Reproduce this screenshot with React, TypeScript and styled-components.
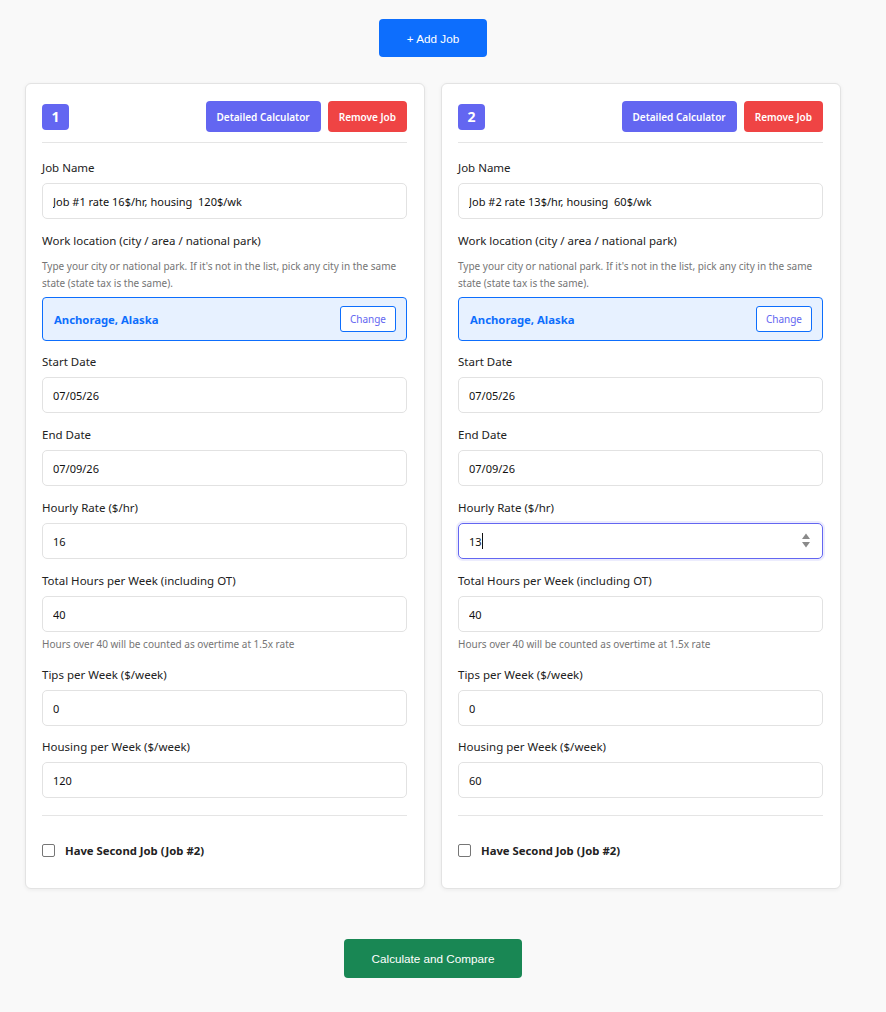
import React from 'react';
import styled, { createGlobalStyle } from 'styled-components';

interface Job {
  id: number;
  name: string;
  location: string;
  start: string;
  end: string;
  rate: string;
  hours: string;
  tips: string;
  housing: string;
  rateFocused?: boolean;
}

const GlobalStyle = createGlobalStyle`
  body {
    margin: 0;
    background: #f9f9f9;
    font-family: 'Noto Sans', 'Liberation Sans', sans-serif;
    color: #212529;
  }
`;

const Page = styled.div`
  width: 866px;
  padding: 19px 0 35px;
  display: flex;
  flex-direction: column;
  align-items: center;
`;

const AddButton = styled.button`
  width: 108px;
  height: 38px;
  border: none;
  border-radius: 4px;
  background: #0d6efd;
  color: #fff;
  font-family: 'Liberation Sans', Arial, sans-serif;
  font-size: 11.7px;
  cursor: pointer;
`;

const Grid = styled.div`
  margin-top: 26px;
  display: grid;
  grid-template-columns: 400px 400px;
  gap: 16px;
`;

const Card = styled.div`
  background: #fff;
  border: 1px solid #e3e3e3;
  border-radius: 6px;
  box-shadow: 0 1px 4px rgba(0, 0, 0, 0.06);
  padding: 17px 17px 30px 16px;
`;

const CardHeader = styled.div`
  display: flex;
  align-items: center;
  justify-content: space-between;
  padding-bottom: 10px;
  border-bottom: 1px solid #e5e5e5;
  margin-bottom: 16px;
`;

const Badge = styled.div`
  width: 27px;
  height: 26px;
  border-radius: 4px;
  background: #6366f1;
  color: #fff;
  font-weight: 700;
  font-size: 14px;
  display: flex;
  align-items: center;
  justify-content: center;
`;

const HeaderActions = styled.div`
  display: flex;
  gap: 7px;
`;

const HeaderButton = styled.button<{ $tone: 'indigo' | 'red' }>`
  height: 31px;
  padding: 0 11px;
  border: none;
  border-radius: 4px;
  background: ${(p) => (p.$tone === 'indigo' ? '#6366f1' : '#ef4444')};
  color: #fff;
  font-family: 'Noto Sans', sans-serif;
  font-weight: 600;
  font-size: 10px;
  cursor: pointer;
`;

const Field = styled.div<{ $gap?: number }>`
  margin-bottom: ${(p) => p.$gap ?? 13}px;
`;

const Label = styled.div`
  font-size: 11.5px;
  line-height: 18px;
  margin-bottom: 6px;
  color: #222;
`;

const InputWrap = styled.div`
  position: relative;
`;

const Input = styled.input<{ $focused?: boolean }>`
  box-sizing: border-box;
  width: 100%;
  height: 36px;
  padding: 0 10px;
  border: 1px solid ${(p) => (p.$focused ? '#6366f1' : '#e2e2e2')};
  box-shadow: ${(p) => (p.$focused ? '0 0 0 2px rgba(99, 102, 241, 0.12)' : 'none')};
  border-radius: 5px;
  font-family: 'Noto Sans', sans-serif;
  font-size: 11px;
  color: #111;
  background: #fff;
  outline: none;
`;

const Caret = styled.span`
  position: absolute;
  left: 24px;
  top: 10px;
  width: 1px;
  height: 16px;
  background: #111;
`;

const Spinner = styled.svg`
  position: absolute;
  right: 12px;
  top: 9px;
`;

const Help = styled.div<{ $tight?: boolean }>`
  font-size: 10px;
  line-height: 17px;
  color: #757575;
  margin: ${(p) => (p.$tight ? '4px 0 0' : '8px 0 5px')};
`;

const LocationBox = styled.div`
  display: flex;
  align-items: center;
  justify-content: space-between;
  height: 44px;
  box-sizing: border-box;
  padding: 0 10px 0 11px;
  background: #e7f1ff;
  border: 1px solid #0d6efd;
  border-radius: 4px;
`;

const LocationName = styled.span`
  color: #0d6efd;
  font-weight: 700;
  font-size: 11.3px;
`;

const ChangeButton = styled.button`
  height: 26px;
  padding: 0 9px;
  background: #fff;
  border: 1px solid #0d6efd;
  border-radius: 3px;
  color: #6366f1;
  font-family: 'Noto Sans', sans-serif;
  font-size: 10px;
  cursor: pointer;
`;

const Divider = styled.hr`
  border: none;
  border-top: 1px solid #e5e5e5;
  margin: 17px 0 27px;
`;

const CheckRow = styled.label`
  display: flex;
  align-items: center;
  gap: 10px;
  font-size: 11.3px;
  font-weight: 700;
  color: #222;
`;

const CheckBox = styled.span`
  width: 11px;
  height: 11px;
  border: 1px solid #767676;
  border-radius: 2px;
  background: #fff;
`;

const CalcButton = styled.button`
  margin-top: 50px;
  width: 178px;
  height: 39px;
  border: none;
  border-radius: 4px;
  background: #198754;
  color: #fff;
  font-family: 'Liberation Sans', Arial, sans-serif;
  font-size: 11.7px;
  cursor: pointer;
`;

const jobs: Job[] = [
  {
    id: 1,
    name: 'Job #1 rate 16$/hr, housing  120$/wk',
    location: 'Anchorage, Alaska',
    start: '07/05/26',
    end: '07/09/26',
    rate: '16',
    hours: '40',
    tips: '0',
    housing: '120',
  },
  {
    id: 2,
    name: 'Job #2 rate 13$/hr, housing  60$/wk',
    location: 'Anchorage, Alaska',
    start: '07/05/26',
    end: '07/09/26',
    rate: '13',
    hours: '40',
    tips: '0',
    housing: '60',
    rateFocused: true,
  },
];

const TextField: React.FC<{ label: string; value: string; gap?: number }> = ({ label, value, gap }) => (
  <Field $gap={gap}>
    <Label>{label}</Label>
    <Input readOnly value={value} />
  </Field>
);

const JobCard: React.FC<{ job: Job }> = ({ job }) => (
  <Card>
    <CardHeader>
      <Badge>{job.id}</Badge>
      <HeaderActions>
        <HeaderButton $tone="indigo">Detailed Calculator</HeaderButton>
        <HeaderButton $tone="red">Remove Job</HeaderButton>
      </HeaderActions>
    </CardHeader>

    <TextField label="Job Name" value={job.name} />

    <Field $gap={12}>
      <Label>Work location (city / area / national park)</Label>
      <Help>
        Type your city or national park. If it's not in the list, pick any city in the same
        state (state tax is the same).
      </Help>
      <LocationBox>
        <LocationName>{job.location}</LocationName>
        <ChangeButton>Change</ChangeButton>
      </LocationBox>
    </Field>

    <TextField label="Start Date" value={job.start} />
    <TextField label="End Date" value={job.end} />

    <Field>
      <Label>Hourly Rate ($/hr)</Label>
      <InputWrap>
        <Input readOnly value={job.rate} $focused={job.rateFocused} />
        {job.rateFocused && (
          <>
            <Caret />
            <Spinner width="10" height="17" viewBox="0 0 10 17">
              <path d="M1 7 L5 1.5 L9 7 Z" fill="#8a8a8a" />
              <path d="M1 10 L5 15.5 L9 10 Z" fill="#8a8a8a" />
            </Spinner>
          </>
        )}
      </InputWrap>
    </Field>

    <Field>
      <Label>Total Hours per Week (including OT)</Label>
      <Input readOnly value={job.hours} />
      <Help $tight>Hours over 40 will be counted as overtime at 1.5x rate</Help>
    </Field>

    <TextField label="Tips per Week ($/week)" value={job.tips} gap={12} />

    <Field>
      <Label>Housing per Week ($/week)</Label>
      <Input readOnly value={job.housing} />
    </Field>

    <Divider />

    <CheckRow>
      <CheckBox />
      Have Second Job (Job #2)
    </CheckRow>
  </Card>
);

const App: React.FC = () => (
  <>
    <GlobalStyle />
    <Page>
      <AddButton>+ Add Job</AddButton>
      <Grid>
        {jobs.map((job) => (
          <JobCard key={job.id} job={job} />
        ))}
      </Grid>
      <CalcButton>Calculate and Compare</CalcButton>
    </Page>
  </>
);

export default App;
